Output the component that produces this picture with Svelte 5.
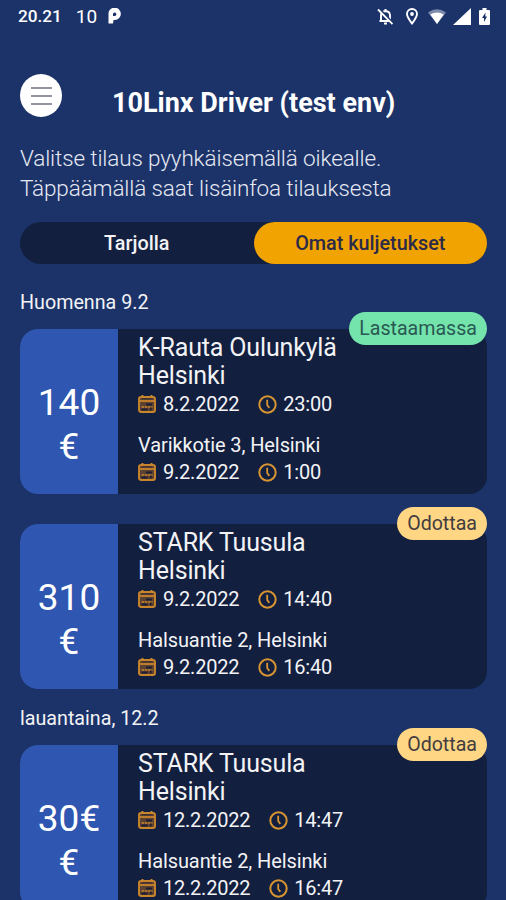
<script>
  let tabs = ["Tarjolla", "Omat kuljetukset"];
  let selected = 1;

  const days = [
    {
      name: "Huomenna 9.2",
      orders: [
        {
          price: "140",
          status: "Lastaamassa",
          loading: true,
          from: ["K-Rauta Oulunkylä", "Helsinki"],
          pickup: { date: "8.2.2022", time: "23:00" },
          to: "Varikkotie 3, Helsinki",
          delivery: { date: "9.2.2022", time: "1:00" }
        },
        {
          price: "310",
          status: "Odottaa",
          from: ["STARK Tuusula", "Helsinki"],
          pickup: { date: "9.2.2022", time: "14:40" },
          to: "Halsuantie 2, Helsinki",
          delivery: { date: "9.2.2022", time: "16:40" }
        }
      ]
    },
    {
      name: "lauantaina, 12.2",
      orders: [
        {
          price: "30€",
          status: "Odottaa",
          from: ["STARK Tuusula", "Helsinki"],
          pickup: { date: "12.2.2022", time: "14:47" },
          to: "Halsuantie 2, Helsinki",
          delivery: { date: "12.2.2022", time: "16:47" }
        }
      ]
    }
  ];
</script>

{#snippet when(slot)}
  <div class="when">
    <svg class="calendar" width="18" height="18" viewBox="0 0 18 18">
      <path d="M4.500 0v3M13.500 0v3" stroke="#c9852c" stroke-width="2" />
      <rect x="1" y="2" width="16" height="15" rx="2" fill="#5b4231" stroke="#c9852c" stroke-width="1.900" />
      <path d="M4 3.800h10" stroke="#3a2c36" stroke-width="1" />
      <path d="M1.500 6h15" stroke="#c9852c" stroke-width="1.800" />
      <path d="M8 9.500h6M3.500 14.500h6" stroke="#1d1c36" stroke-width="1.800" />
      <path d="M3.500 12h11" stroke="#c9852c" stroke-width="1.500" stroke-dasharray="2.600 .7" />
      <path d="M12.800 12.500v3" stroke="#1d1c36" stroke-width="1.500" />
    </svg>
    <span class="date">{slot.date}</span>
    <svg class="clock" width="19" height="19" viewBox="0 0 19 19" fill="none" stroke="#d79431">
      <circle cx="9.500" cy="9.500" r="8.200" stroke-width="2" />
      <path d="M9.200 4.800v5.200l2.100 2.900" stroke-width="1.800" />
    </svg>
    <span class="time">{slot.time}</span>
  </div>
{/snippet}

<div class="screen">
  <div class="statusbar">
    <span class="phone-time">20.21</span>
    <span class="ten">10</span>
    <svg class="parking" width="13" height="16" viewBox="0 0 13 16">
      <path d="M.5 15.500V6.500A6.200 6.200 0 1 1 6.800 12H5.500L5 15.500Z" fill="#fff" />
      <path d="M5 8V6.300a1.700 1.700 0 1 1 1.800 1.700Z" fill="#1c3369" />
    </svg>
    <div class="system">
      <svg width="17" height="17" viewBox="0 0 17 17" fill="none" stroke="#fff">
        <path d="M4 13V7.500C4 5 5.800 3.200 8.500 3.200S13 5 13 7.500V13M2.500 13h12" stroke-width="1.900" />
        <path d="M8.500 1v2M7 15.500h3" stroke-width="2" />
        <path d="M2.200 .8l14.300 14.500" stroke="#1c3369" stroke-width="2" />
        <path d="M1 1.500l14.500 14.700" stroke-width="1.800" />
      </svg>
      <svg width="12" height="17" viewBox="0 0 12 17" fill="none" stroke="#fff">
        <path d="M6 15.500C3 11.500 1 9 1 6a5 5 0 0 1 10 0c0 3-2 5.500-5 9.500z" stroke-width="1.900" />
        <circle cx="6" cy="6" r="1.900" fill="#fff" stroke="none" />
      </svg>
      <svg width="18" height="15" viewBox="0 0 18 15">
        <path d="M0 3.500Q9-3 18 3.500L9 15z" fill="#7d8aaa" />
        <path d="M2.300 5.500Q9 1.500 15.700 5.500L9 15z" fill="#fff" />
      </svg>
      <svg width="18" height="17" viewBox="0 0 18 17">
        <path d="M18 0v17H0z" fill="#fff" />
      </svg>
      <svg width="11" height="17" viewBox="0 0 11 17">
        <path d="M3.500 0h4v2H10q1 0 1 1v13q0 1-1 1H1q-1 0-1-1V3q0-1 1-1h2.500z" fill="#fff" />
        <path d="M6.500 4.500L3 10h2v4l3-5.500H6.300z" fill="#1c3369" />
      </svg>
    </div>
  </div>

  <header>
    <button class="menu" aria-label="Valikko">
      <span></span>
      <span></span>
      <span></span>
    </button>
    <h1>10Linx Driver (test env)</h1>
  </header>

  <p class="intro">
    Valitse tilaus pyyhkäisemällä oikealle.<br />
    Täppäämällä saat lisäinfoa tilauksesta
  </p>

  <div class="tabs">
    {#each tabs as tab, i}
      <button class:active={selected == i} on:click={() => (selected = i)}>{tab}</button>
    {/each}
  </div>

  {#each days as day}
    <section>
      <h2>{day.name}</h2>
      {#each day.orders as order}
        <div class="card">
          <div class="price">
            <span>{order.price}</span>
            <span>€</span>
          </div>
          <div class="info">
            <h3>{order.from[0]}<br />{order.from[1]}</h3>
            {@render when(order.pickup)}
            <div class="address">{order.to}</div>
            {@render when(order.delivery)}
          </div>
          <span class="badge" class:loading={order.loading}>{order.status}</span>
        </div>
      {/each}
    </section>
  {/each}
</div>

<style>
  :global(body) {
    margin: 0;
    background: #1c3369;
  }
  .screen {
    box-sizing: border-box;
    height: 900px;
    overflow: hidden;
    padding: 0 19px 0 20px;
    background: #1c3369;
    color: #f3f3f6;
    font-family: Roboto, sans-serif;
  }
  button {
    border: none;
    padding: 0;
    font-family: inherit;
    cursor: pointer;
  }
  .statusbar {
    display: flex;
    align-items: center;
    height: 32px;
    margin: 0 -4px 0 -2px;
    font-size: 17.200px;
    font-weight: 500;
    color: #fff;
  }
  .ten {
    margin-left: 14px;
    font-size: 19px;
    font-weight: 400;
  }
  .parking {
    margin-left: 11px;
  }
  .system {
    display: flex;
    align-items: center;
    margin-left: auto;
    gap: 8px;
    margin-right: 1px;
  }
  .system svg:nth-child(1) {
    margin-right: 4px;
  }
  .system svg:nth-child(2) {
    margin-right: 2px;
  }
  .system svg:nth-child(3) {
    margin-right: 1px;
  }
  .system svg:nth-child(4) {
    margin-left: -2px;
  }
  header {
    display: flex;
    height: 85px;
    padding-top: 42px;
    box-sizing: border-box;
  }
  .menu {
    display: flex;
    flex-direction: column;
    align-items: center;
    justify-content: center;
    gap: 6px;
    width: 42px;
    height: 43px;
    flex: none;
    border-radius: 50%;
    background: #fff;
  }
  .menu span {
    width: 21px;
    height: 2px;
    background: #92949f;
  }
  h1 {
    margin: 13px 0 0 50px;
    font-size: 27px;
    line-height: 32px;
    font-weight: 700;
    color: #fff;
    white-space: nowrap;
  }
  .intro {
    margin: 26px 0 0;
    font-size: 22.500px;
    letter-spacing: -0.13px;
    line-height: 30px;
    font-weight: 300;
    color: #e6e9f3;
    white-space: nowrap;
  }
  .tabs {
    display: flex;
    height: 42px;
    margin-top: 19px;
    border-radius: 21px;
    background: #121f3f;
  }
  .tabs button {
    flex: 1;
    border-radius: 21px;
    background: none;
    color: #f3f3f6;
    font-size: 19.800px;
    font-weight: 500;
  }
  .tabs button.active {
    background: #f1a302;
    color: #2c2a49;
  }
  section {
    padding-top: 27px;
  }
  section + section {
    padding-top: 18px;
  }
  h2 {
    margin: 0 0 14px;
    font-size: 19.700px;
    line-height: 24px;
    font-weight: 400;
  }
  .card {
    position: relative;
    display: flex;
    height: 165px;
    border-radius: 18px;
    background: #121f3f;
  }
  .card + .card {
    margin-top: 30px;
  }
  .price {
    display: flex;
    flex-direction: column;
    align-items: center;
    box-sizing: border-box;
    width: 98px;
    padding-top: 52px;
    border-radius: 18px 0 0 18px;
    background: #2f56b1;
    color: #fff;
    font-size: 37px;
    line-height: 44px;
  }
  .info {
    padding: 5px 0 0 20px;
  }
  h3 {
    margin: 0;
    font-size: 25px;
    letter-spacing: -0.16px;
    line-height: 28px;
    font-weight: 400;
  }
  .when {
    display: flex;
    align-items: center;
    height: 28px;
    font-size: 20px;
    letter-spacing: -0.22px;
  }
  .date {
    margin: 0 19px 0 7px;
  }
  .time {
    margin-left: 6px;
  }
  .address {
    margin-top: 15px;
    font-size: 20px;
    letter-spacing: -0.1px;
    line-height: 25px;
  }
  .badge {
    position: absolute;
    top: -17px;
    right: 0;
    padding: 1px 10px 0;
    border-radius: 17px;
    background: #ffd683;
    color: #433c40;
    font-size: 19.600px;
    line-height: 32px;
  }
  .badge.loading {
    background: #74e3ac;
    color: #285952;
  }
</style>
